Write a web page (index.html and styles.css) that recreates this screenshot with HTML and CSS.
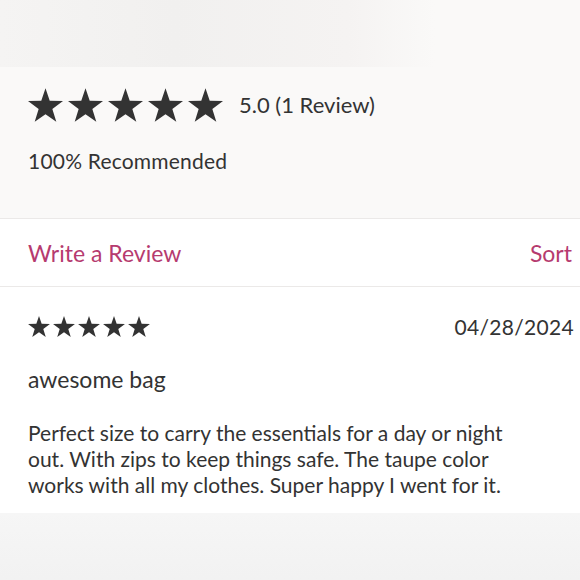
FILE: index.html
```html
<!DOCTYPE html>
<html lang="en">
<head>
    <meta charset="UTF-8">
    <title>Reviews</title>
    <link rel="stylesheet" href="styles.css">
</head>
<body>
    <div class="top-band"></div>

    <div class="summary">
        <div class="rating-row">
            <div class="stars stars-big">
                <svg viewBox="0 0 24 23"><polygon points="12,0 14.9,8.6 24,8.8 16.7,14.2 19.4,23 12,17.8 4.6,23 7.3,14.2 0,8.8 9.1,8.6"/></svg>
                <svg viewBox="0 0 24 23"><polygon points="12,0 14.9,8.6 24,8.8 16.7,14.2 19.4,23 12,17.8 4.6,23 7.3,14.2 0,8.8 9.1,8.6"/></svg>
                <svg viewBox="0 0 24 23"><polygon points="12,0 14.9,8.6 24,8.8 16.7,14.2 19.4,23 12,17.8 4.6,23 7.3,14.2 0,8.8 9.1,8.6"/></svg>
                <svg viewBox="0 0 24 23"><polygon points="12,0 14.9,8.6 24,8.8 16.7,14.2 19.4,23 12,17.8 4.6,23 7.3,14.2 0,8.8 9.1,8.6"/></svg>
                <svg viewBox="0 0 24 23"><polygon points="12,0 14.9,8.6 24,8.8 16.7,14.2 19.4,23 12,17.8 4.6,23 7.3,14.2 0,8.8 9.1,8.6"/></svg>
            </div>
            <span class="score">5.0 (1 Review)</span>
        </div>
        <p class="recommended">100% Recommended</p>
    </div>

    <div class="actions">
        <a class="action-link" href="#">Write a Review</a>
        <a class="action-link" href="#">Sort</a>
    </div>

    <div class="review">
        <div class="review-head">
            <div class="stars stars-small">
                <svg viewBox="0 0 24 23"><polygon points="12,0 14.9,8.6 24,8.8 16.7,14.2 19.4,23 12,17.8 4.6,23 7.3,14.2 0,8.8 9.1,8.6"/></svg>
                <svg viewBox="0 0 24 23"><polygon points="12,0 14.9,8.6 24,8.8 16.7,14.2 19.4,23 12,17.8 4.6,23 7.3,14.2 0,8.8 9.1,8.6"/></svg>
                <svg viewBox="0 0 24 23"><polygon points="12,0 14.9,8.6 24,8.8 16.7,14.2 19.4,23 12,17.8 4.6,23 7.3,14.2 0,8.8 9.1,8.6"/></svg>
                <svg viewBox="0 0 24 23"><polygon points="12,0 14.9,8.6 24,8.8 16.7,14.2 19.4,23 12,17.8 4.6,23 7.3,14.2 0,8.8 9.1,8.6"/></svg>
                <svg viewBox="0 0 24 23"><polygon points="12,0 14.9,8.6 24,8.8 16.7,14.2 19.4,23 12,17.8 4.6,23 7.3,14.2 0,8.8 9.1,8.6"/></svg>
            </div>
            <span class="date">04/28/2024</span>
        </div>
        <h3 class="review-title">awesome bag</h3>
        <p class="review-body">Perfect size to carry the essentials for a day or night out. With zips to keep things safe. The taupe color works with all my clothes. Super happy I went for it.</p>
    </div>

    <div class="bottom-band"></div>
</body>
</html>
```

FILE: styles.css
```css
body {
    margin: 0;
    font-family: 'Lato', 'Open Sans', sans-serif;
    color: #333;
    background: #fff;
    overflow: hidden;
}

.top-band {
    height: 67px;
    background: linear-gradient(90deg, #f5f4f3 0%, #f1f0ef 30%, #f5f3f2 60%, #faf9f8 75%, #faf9f8 100%);
}

.summary {
    background-color: #faf9f8;
    padding: 20px 28px 45px;
    border-bottom: 1px solid #ebe9e8;
}

.rating-row {
    display: flex;
    align-items: center;
    height: 35px;
}

.stars {
    display: flex;
}

.stars svg {
    fill: #333;
    display: block;
}

.stars-big {
    gap: 5px;
}

.stars-big svg {
    width: 35px;
    height: 34px;
}

.score {
    font-size: 22px;
    margin-left: 16px;
}

.recommended {
    margin: 27px 0 0;
    font-size: 21px;
    line-height: 24px;
    letter-spacing: 0.2px;
}

.actions {
    display: flex;
    justify-content: space-between;
    align-items: center;
    height: 67px;
    padding: 0 8px 0 28px;
    border-bottom: 1px solid #ebe9e8;
}

.action-link {
    color: #b63b6f;
    text-decoration: none;
    font-size: 23px;
}

.review {
    padding: 28px 6px 15px 28px;
}

.review-head {
    display: flex;
    justify-content: space-between;
    align-items: center;
    height: 22px;
}

.stars-small {
    gap: 3px;
}

.stars-small svg {
    width: 22px;
    height: 21px;
}

.date {
    font-size: 21px;
    letter-spacing: 0.3px;
}

.review-title {
    margin: 30px 0 0;
    font-size: 23px;
    font-weight: normal;
    line-height: 24px;
}

.review-body {
    margin: 29px 0 0;
    width: 500px;
    font-size: 21px;
    line-height: 26px;
}

.bottom-band {
    height: 80px;
    background: linear-gradient(180deg, #f6f6f6 0%, #f1f1f1 100%);
}
```
